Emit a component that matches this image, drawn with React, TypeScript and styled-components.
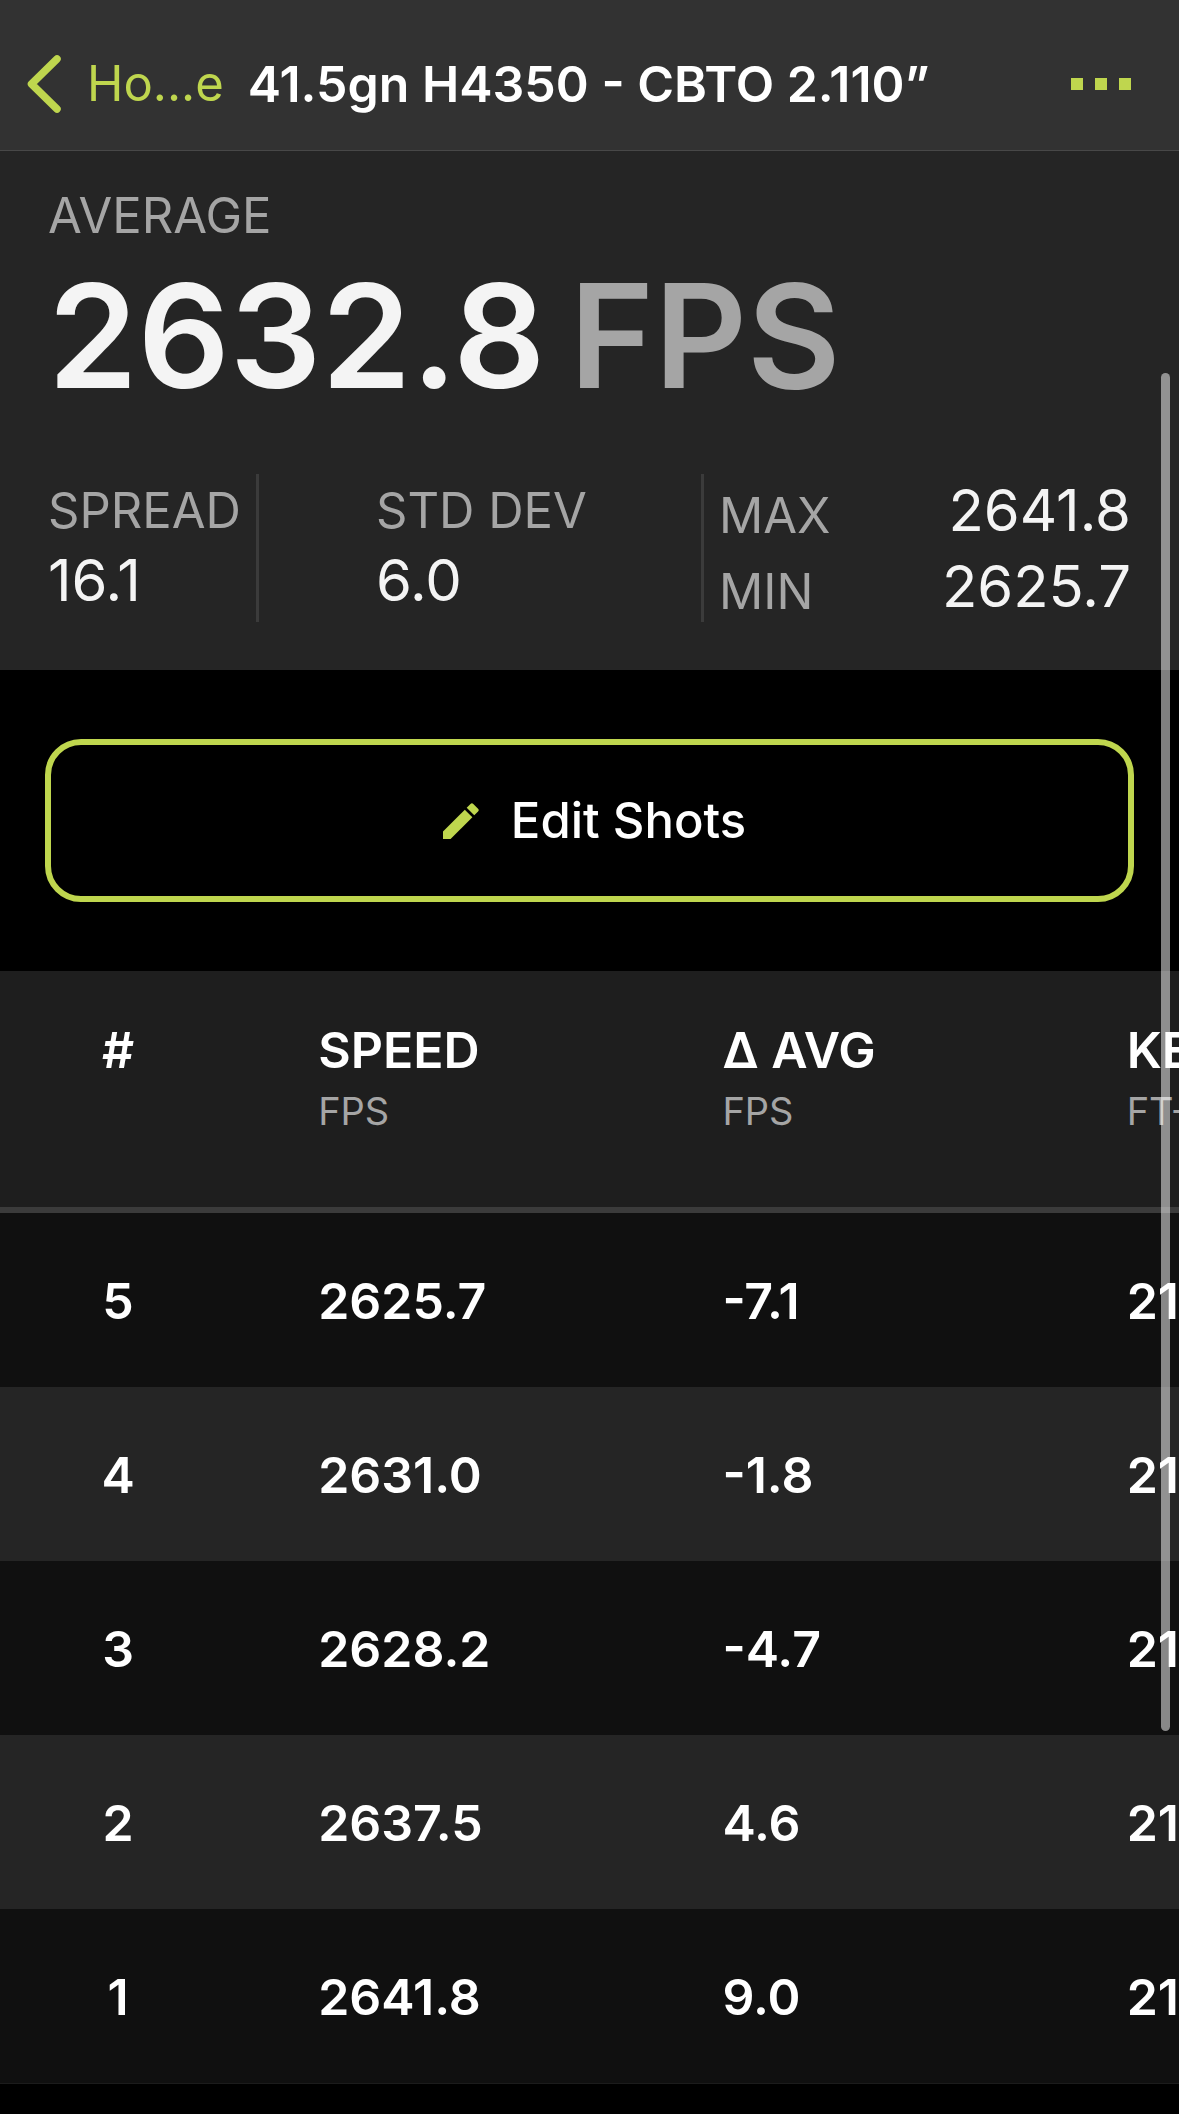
import React from "react";
import styled, { createGlobalStyle } from "styled-components";

const color = {
  accent: "#bfd64e",
  bar: "#323232",
  panel: "#252525",
  tableHead: "#1e1e1e",
  rowDark: "#101010",
  line: "#3b3b3b",
  muted: "#a5a5a5",
  value: "#f4f4f4",
};

const GlobalStyle = createGlobalStyle`
  * { box-sizing: border-box; }
  body {
    margin: 0;
    background: #000;
    color: #fff;
    font-family: Inter, "Liberation Sans", sans-serif;
    font-size: 50px;
    line-height: 60px;
  }
  button { font: inherit; color: inherit; }
`;

const Screen = styled.div`
  position: relative;
  min-height: 100vh;
  overflow: hidden;
`;

const NavBar = styled.header`
  display: flex;
  align-items: center;
  padding: 18px 48px 0 27px;
  height: 151px;
  background: ${color.bar};
  border-bottom: 1px solid #484848;
`;

const BackLink = styled.a`
  display: flex;
  align-items: center;
  gap: 26px;
  color: ${color.accent};
  font-size: 49px;
  text-decoration: none;
  white-space: nowrap;
`;

const Title = styled.h1`
  flex: 1;
  margin: 0 0 0 24px;
  font-size: 50px;
  font-weight: 600;
  white-space: nowrap;
`;

const MoreButton = styled.button`
  display: flex;
  gap: 12px;
  padding: 24px 0;
  border: 0;
  background: none;
`;

const Dot = styled.span`
  width: 12px;
  height: 12px;
  background: ${color.accent};
`;

const Summary = styled.section`
  padding: 35px 48px 48px;
  background: ${color.panel};
`;

const Label = styled.div`
  font-size: 49px;
  color: ${color.muted};
`;

const Average = styled.div`
  display: flex;
  gap: 24px;
  margin: 10px 0 58px;
  font-size: 144px;
  line-height: 160px;
  font-weight: 600;
  color: ${color.value};
`;

const AverageUnit = styled.span`
  color: ${color.muted};
`;

const Stats = styled.div`
  display: grid;
  grid-template-columns: 211fr 445fr 427fr;
  grid-template-rows: 148px;
`;

const Stat = styled.div<{ $inset?: boolean }>`
  display: flex;
  flex-direction: column;
  justify-content: center;
  gap: 4px;
  padding-left: ${(p) => (p.$inset ? "117px" : "0")};
  border-right: 3px solid ${color.line};
  white-space: nowrap;
`;

const StatValue = styled.div`
  font-size: 58px;
  line-height: 70px;
  color: ${color.value};
`;

const Extremes = styled.div`
  display: flex;
  flex-direction: column;
  justify-content: center;
  padding-left: 15px;
`;

const Extreme = styled.div`
  display: flex;
  flex: none;
  justify-content: space-between;
  align-items: flex-end;
  height: 76px;
  ${Label} { line-height: 64px; }
  ${StatValue} { line-height: 76px; }
`;

const Actions = styled.section`
  padding: 69px 45px;
`;

const EditButton = styled.button`
  display: flex;
  align-items: center;
  justify-content: center;
  gap: 32px;
  width: 100%;
  height: 163px;
  padding: 0 0 0 10px;
  border: 6px solid ${color.accent};
  border-radius: 36px;
  background: #000;
  font-size: 49px;
  font-weight: 500;
`;

const TableScroller = styled.div`
  overflow-x: auto;
  scrollbar-width: none;
`;

const ShotTable = styled.table`
  width: 1449px;
  table-layout: fixed;
  border-spacing: 0;
  font-weight: 600;
  border-bottom: 1px solid #1c1c1c;
`;

const HeadCell = styled.th<{ $index?: boolean }>`
  width: ${(p) => (p.$index ? "236px" : "404px")};
  height: 242px;
  padding: ${(p) => (p.$index ? "49px 0 0" : "49px 0 0 82px")};
  border-bottom: 6px solid ${color.line};
  background: ${color.tableHead};
  font-weight: 600;
  text-align: ${(p) => (p.$index ? "center" : "left")};
  vertical-align: top;
  white-space: nowrap;
`;

const Unit = styled.div`
  margin-top: 8px;
  font-size: 38px;
  line-height: 46px;
  font-weight: 400;
  color: ${color.muted};
`;

const ShotRow = styled.tr`
  background: ${color.rowDark};
  &:nth-child(even) { background: ${color.panel}; }
`;

const Cell = styled.td<{ $index?: boolean }>`
  height: 174px;
  padding: ${(p) => (p.$index ? "2px 0 0" : "2px 0 0 82px")};
  text-align: ${(p) => (p.$index ? "center" : "left")};
`;

const ScrollThumb = styled.div`
  position: absolute;
  top: 373px;
  right: 9px;
  width: 9px;
  height: 1358px;
  border-radius: 5px;
  background: rgba(255, 255, 255, 0.5);
`;

const shots = [
  { id: 5, speed: "2625.7", delta: "-7.1", energy: "21" },
  { id: 4, speed: "2631.0", delta: "-1.8", energy: "21" },
  { id: 3, speed: "2628.2", delta: "-4.7", energy: "21" },
  { id: 2, speed: "2637.5", delta: "4.6", energy: "21" },
  { id: 1, speed: "2641.8", delta: "9.0", energy: "21" },
];

const columns = [
  { title: "SPEED", unit: "FPS" },
  { title: "Δ AVG", unit: "FPS" },
  { title: "KE", unit: "FT-LB" },
];

const Chevron = () => (
  <svg width="34" height="58" viewBox="0 0 34 58" fill="none" aria-hidden="true">
    <path d="M30 4L4.500 29L30 54" stroke={color.accent} strokeWidth="7.500" strokeLinecap="round" strokeLinejoin="round" />
  </svg>
);

const Pencil = () => (
  <svg width="36" height="36" viewBox="0 0 38 38" fill={color.accent} aria-hidden="true">
    <path d="M0 30L23 7L31 15L8 38H0Z" />
    <path d="M25 5L29 1Q30.500 -0.500 32 1L37 6Q38.500 7.500 37 9L33 13Z" />
  </svg>
);

export default function App() {
  return (
    <Screen>
      <GlobalStyle />
      <NavBar>
        <BackLink href="#home">
          <Chevron />
          Ho...e
        </BackLink>
        <Title>41.5gn H4350 - CBTO 2.110”</Title>
        <MoreButton aria-label="More options">
          <Dot />
          <Dot />
          <Dot />
        </MoreButton>
      </NavBar>

      <Summary>
        <Label>AVERAGE</Label>
        <Average>
          2632.8<AverageUnit>FPS</AverageUnit>
        </Average>
        <Stats>
          <Stat>
            <Label>SPREAD</Label>
            <StatValue>16.1</StatValue>
          </Stat>
          <Stat $inset>
            <Label>STD DEV</Label>
            <StatValue>6.0</StatValue>
          </Stat>
          <Extremes>
            <Extreme>
              <Label>MAX</Label>
              <StatValue>2641.8</StatValue>
            </Extreme>
            <Extreme>
              <Label>MIN</Label>
              <StatValue>2625.7</StatValue>
            </Extreme>
          </Extremes>
        </Stats>
      </Summary>

      <Actions>
        <EditButton>
          <Pencil />
          Edit Shots
        </EditButton>
      </Actions>

      <TableScroller>
        <ShotTable>
          <thead>
            <tr>
              <HeadCell $index>#</HeadCell>
              {columns.map((c) => (
                <HeadCell key={c.title}>
                  {c.title}
                  <Unit>{c.unit}</Unit>
                </HeadCell>
              ))}
            </tr>
          </thead>
          <tbody>
            {shots.map((s) => (
              <ShotRow key={s.id}>
                <Cell $index>{s.id}</Cell>
                <Cell>{s.speed}</Cell>
                <Cell>{s.delta}</Cell>
                <Cell>{s.energy}</Cell>
              </ShotRow>
            ))}
          </tbody>
        </ShotTable>
      </TableScroller>
      <ScrollThumb />
    </Screen>
  );
}
